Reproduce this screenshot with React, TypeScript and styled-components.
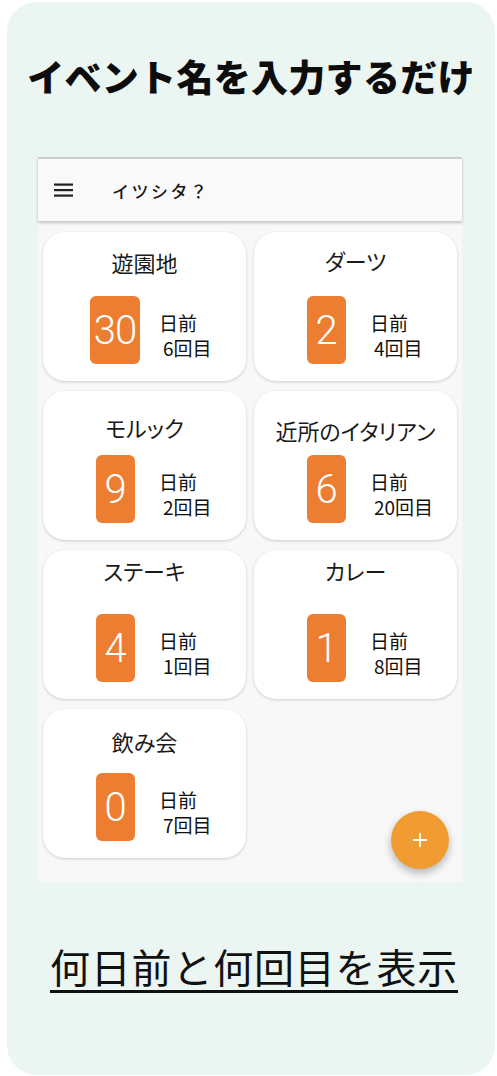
import React from 'react';
import styled, { createGlobalStyle } from 'styled-components';

const GlobalStyle = createGlobalStyle`
  html, body {
    margin: 0;
    padding: 0;
    background: #ffffff;
  }
  body {
    font-family: "Noto Sans CJK JP", "Noto Sans", sans-serif;
    color: #111;
  }
`;

type EventItem = {
  name: string;
  days: number;
  count: number;
  titleTop: number;
};

const events: EventItem[] = [
  { name: '遊園地', days: 30, count: 6, titleTop: 16 },
  { name: 'ダーツ', days: 2, count: 4, titleTop: 14 },
  { name: 'モルック', days: 9, count: 2, titleTop: 22 },
  { name: '近所のイタリアン', days: 6, count: 20, titleTop: 25 },
  { name: 'ステーキ', days: 4, count: 1, titleTop: 6 },
  { name: 'カレー', days: 1, count: 8, titleTop: 6 },
  { name: '飲み会', days: 0, count: 7, titleTop: 18 },
];

const Frame = styled.div`
  margin: 2px 2px 0 7px;
  width: 488px;
  height: 1073px;
  border-radius: 30px;
  background: #ebf5f1;
  display: flex;
  flex-direction: column;
  align-items: center;
  padding-top: 52px;
  box-sizing: border-box;
`;

const Headline = styled.h1`
  margin: 0;
  font-size: 37px;
  line-height: 44px;
  font-weight: 900;
  letter-spacing: 0.3px;
  color: #0d0d0d;
  white-space: nowrap;
`;

const Screen = styled.div`
  position: relative;
  align-self: flex-start;
  margin: 59px 0 0 31px;
  width: 424px;
  height: 725px;
  background: #f8f8f8;
  display: flex;
  flex-direction: column;
`;

const AppBar = styled.header`
  height: 62px;
  flex-shrink: 0;
  background: #f9f9f9;
  border-top: 2px solid #cdcdcd;
  box-shadow: 0 2px 3px rgba(0, 0, 0, 0.22);
  display: flex;
  align-items: center;
  padding-left: 16px;
  gap: 39px;
  position: relative;
  z-index: 1;
`;

const AppTitle = styled.span`
  font-size: 17px;
  font-weight: 500;
  letter-spacing: 2.5px;
  color: #1a1a1a;
`;

const Grid = styled.div`
  display: grid;
  grid-template-columns: 203px 203px;
  grid-auto-rows: 149px;
  gap: 10px 8px;
  padding: 11px 5px 0 5px;
`;

const Card = styled.div`
  background: #ffffff;
  border-radius: 22px;
  box-shadow: 0 1px 3px rgba(0, 0, 0, 0.18);
  display: grid;
  grid-template-rows: 56px 1fr;
`;

const CardTitle = styled.div<{ $top: number }>`
  margin-top: ${(p) => p.$top}px;
  font-size: 22px;
  line-height: 28px;
  text-align: center;
  color: #1a1a1a;
  font-feature-settings: "palt";
  white-space: nowrap;
`;

const Body = styled.div`
  display: flex;
  align-items: flex-start;
  padding-top: 8px;
`;

const BadgeSlot = styled.div`
  width: 60px;
  margin-left: 42px;
  display: flex;
  justify-content: center;
`;

const Badge = styled.div`
  min-width: 39px;
  height: 68px;
  padding: 0 4px;
  box-sizing: border-box;
  border-radius: 6px;
  background: #ed7d31;
  color: #ffffff;
  font-family: Roboto, "Liberation Sans", sans-serif;
  font-weight: 300;
  font-size: 40px;
  letter-spacing: -1px;
  display: flex;
  align-items: center;
  justify-content: center;
`;

const Stats = styled.div`
  margin-left: 14px;
  padding-top: 14px;
  font-size: 19px;
  line-height: 25px;
  color: #111;
  display: flex;
  flex-direction: column;
`;

const Count = styled.span`
  padding-left: 4px;
`;

const Fab = styled.button`
  position: absolute;
  right: 13px;
  bottom: 13px;
  width: 58px;
  height: 58px;
  border: none;
  border-radius: 50%;
  background: #f19c33;
  box-shadow: 0 4px 8px rgba(0, 0, 0, 0.28);
  display: flex;
  align-items: center;
  justify-content: center;
  padding: 0;
`;

const Caption = styled.p`
  margin: 60px 0 0 6px;
  font-size: 40px;
  line-height: 48px;
  letter-spacing: 0.8px;
  color: #111;
  text-decoration: underline;
  text-decoration-thickness: 3px;
  text-underline-offset: 7px;
  white-space: nowrap;
`;

const MenuIcon = () => (
  <svg width="19" height="14" viewBox="0 0 19 14">
    <rect x="0" y="0.5" width="19" height="2.2" fill="#222" />
    <rect x="0" y="6" width="19" height="2.2" fill="#222" />
    <rect x="0" y="11.5" width="19" height="2.2" fill="#222" />
  </svg>
);

const PlusIcon = () => (
  <svg width="16" height="16" viewBox="0 0 16 16">
    <path d="M8 1v14M1 8h14" stroke="#fff" strokeWidth="1.8" />
  </svg>
);

const EventCard = ({ item }: { item: EventItem }) => (
  <Card>
    <CardTitle $top={item.titleTop}>{item.name}</CardTitle>
    <Body>
      <BadgeSlot>
        <Badge>{item.days}</Badge>
      </BadgeSlot>
      <Stats>
        <span>日前</span>
        <Count>{item.count}回目</Count>
      </Stats>
    </Body>
  </Card>
);

export default function App() {
  return (
    <>
      <GlobalStyle />
      <Frame>
        <Headline>イベント名を入力するだけ</Headline>
        <Screen>
          <AppBar>
            <MenuIcon />
            <AppTitle>イツシタ？</AppTitle>
          </AppBar>
          <Grid>
            {events.map((e) => (
              <EventCard key={e.name} item={e} />
            ))}
          </Grid>
          <Fab aria-label="追加">
            <PlusIcon />
          </Fab>
        </Screen>
        <Caption>何日前と何回目を表示</Caption>
      </Frame>
    </>
  );
}
